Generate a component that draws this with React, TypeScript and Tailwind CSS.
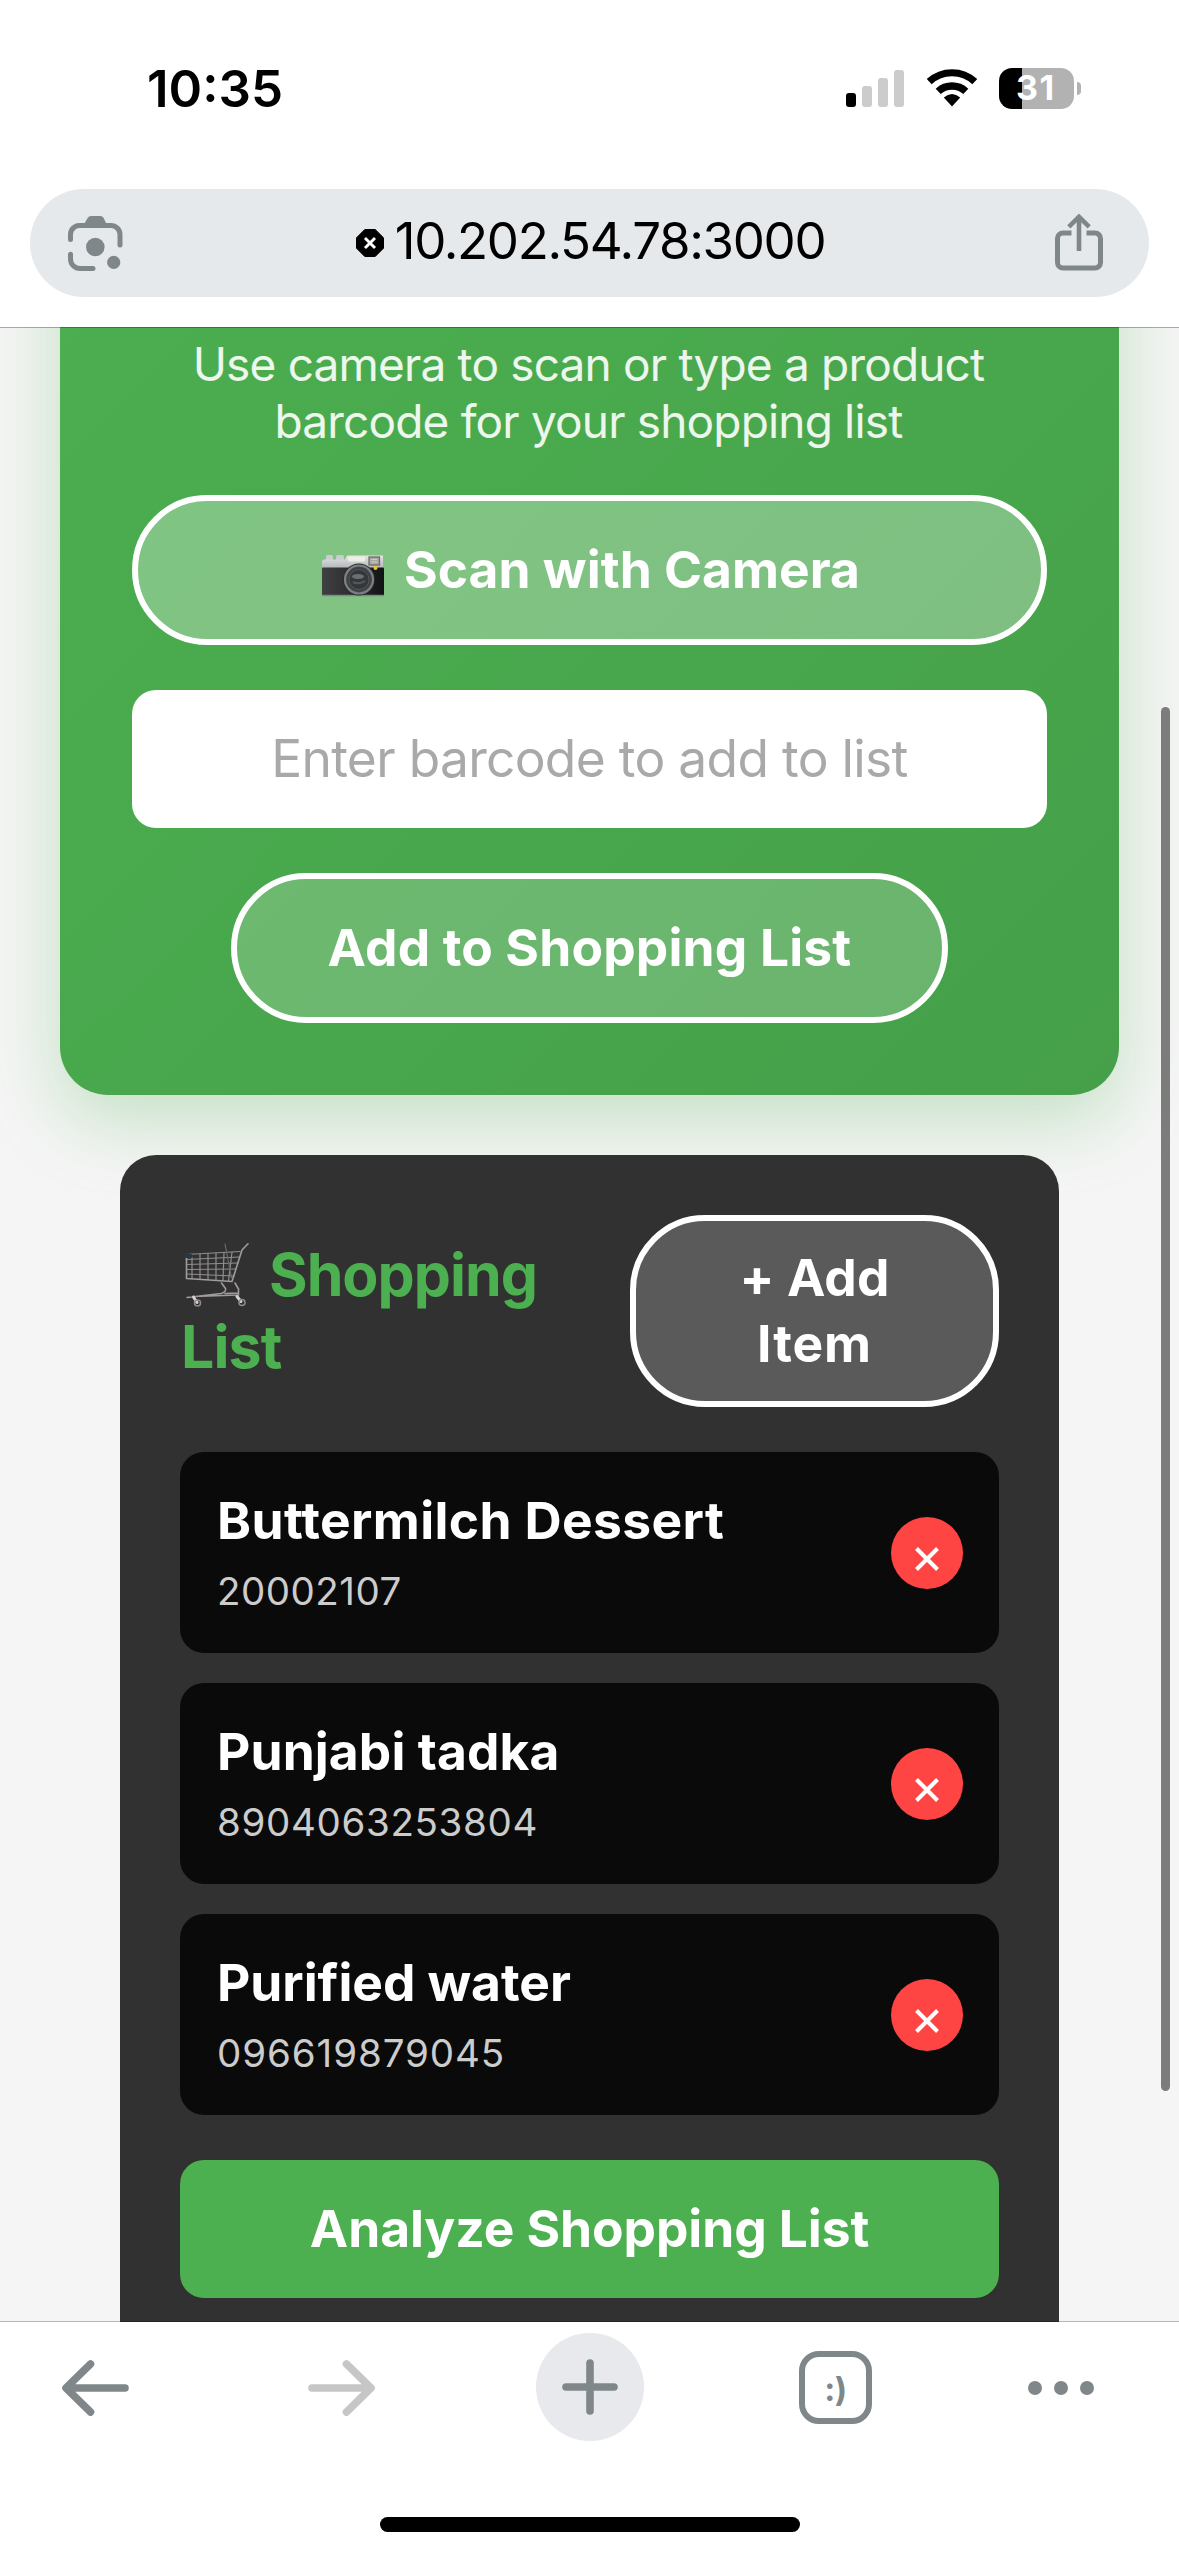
import React from "react";

const items = [
  { name: "Buttermilch Dessert", code: "20002107", nameCls: "tracking-[0.37px]", codeCls: "tracking-[0.5px]" },
  { name: "Punjabi tadka", code: "8904063253804", nameCls: "tracking-[0.1px]", codeCls: "tracking-[0.66px]" },
  { name: "Purified water", code: "096619879045", nameCls: "tracking-[-0.05px]", codeCls: "tracking-[0.92px]" },
];

function Wifi() {
  return (
    <svg width="51" height="38" viewBox="0 0 51 38" fill="none" stroke="#000">
      <path d="M2.2 12.7A33.5 33.5 0 0 1 47.8 12.7" strokeWidth="7.2" />
      <path d="M11.2 22.4A20.3 20.3 0 0 1 38.8 22.4" strokeWidth="7.4" />
      <path d="M25 37.4L16.8 28.6Q25 21.3 33.2 28.6Z" fill="#000" stroke="none" />
    </svg>
  );
}

function LensIcon() {
  return (
    <svg width="55" height="55" viewBox="0 0 55 55" fill="none" stroke="#80878a" strokeWidth="5" strokeLinecap="round">
      <path d="M2.5 23.5V18.5a9 9 0 0 1 9-9H43a9 9 0 0 1 9 9V29" />
      <path d="M2.5 38.2V43a9.5 9.5 0 0 0 9.5 9.5H25" />
      <g fill="#80878a" stroke="none">
        <path d="M15.5 9L19.8 1.8Q20.8 0 23 0H32.5Q34.5 0 35.5 1.8L39 9Z" />
        <circle cx="27.3" cy="31" r="9.3" />
        <circle cx="45.7" cy="46.4" r="6.6" />
      </g>
    </svg>
  );
}

function InsecureIcon() {
  return (
    <svg width="28" height="28" viewBox="0 0 28 28">
      <path d="M8.8 0.5H19.2L27.5 8.8V19.2L19.2 27.5H8.8L0.5 19.2V8.8Z" fill="#000" stroke="#000" strokeLinejoin="round" />
      <path d="M9 9L19 19M19 9L9 19" stroke="#fff" strokeWidth="2.9" />
    </svg>
  );
}

function ShareIcon() {
  return (
    <svg width="48" height="58" viewBox="0 0 48 58" fill="none" stroke="#80878a" strokeWidth="5">
      <path d="M16.5 19H8a5.5 5.5 0 0 0-5.5 5.5V48.5a5.5 5.5 0 0 0 5.5 5.5H40a5.5 5.5 0 0 0 5.5-5.5V24.5a5.5 5.5 0 0 0-5.5-5.5H31.5" />
      <path d="M24 37V4" strokeWidth="4.6" />
      <path d="M13.8 12.8L24 2.8L34.2 12.8" strokeWidth="4.6" />
    </svg>
  );
}

function CameraArt() {
  return (
    <svg width="62" height="42" viewBox="0 0 62 42">
      <defs>
        <linearGradient id="cam-top" x1="0" y1="0" x2="0" y2="1">
          <stop offset="0" stopColor="#e4e6e7" />
          <stop offset="1" stopColor="#b4b8ba" />
        </linearGradient>
        <linearGradient id="cam-body" x1="0" y1="0" x2="1" y2="0">
          <stop offset="0" stopColor="#3f4042" />
          <stop offset="0.6" stopColor="#29292b" />
          <stop offset="1" stopColor="#111214" />
        </linearGradient>
        <radialGradient id="cam-lens">
          <stop offset="0" stopColor="#65696c" />
          <stop offset="0.55" stopColor="#2d3033" />
          <stop offset="1" stopColor="#4b4f52" />
        </radialGradient>
      </defs>
      <rect x="4" y="0" width="7" height="6" rx="1.5" fill="#c9cdcf" />
      <rect x="14" y="0" width="8" height="6" rx="1.5" fill="#c9cdcf" />
      <path d="M0 7Q0 4.500 2.500 4.500H23L25 0.500H61V13H0Z" fill="url(#cam-top)" />
      <rect x="0" y="12.5" width="62" height="28" rx="1" fill="url(#cam-body)" />
      <path d="M0.5 40.5H61.5" stroke="#85888a" strokeWidth="1.5" />
      <rect x="26" y="1.5" width="17" height="5" rx="1.5" fill="#efeee2" />
      <rect x="47" y="2" width="10.5" height="8" fill="#aaa9a2" stroke="#6e6b64" strokeWidth="1.3" />
      <path d="M49.5 4.5H55M49.5 7H55" stroke="#d0cdbd" strokeWidth="1" />
      <circle cx="37" cy="24.5" r="16" fill="#292b2d" />
      <circle cx="37" cy="24.5" r="14" fill="url(#cam-lens)" stroke="#7d8082" strokeWidth="2.2" />
      <circle cx="37" cy="24.5" r="10" fill="#35383b" stroke="#56595c" strokeWidth="1" />
      <ellipse cx="36" cy="21.5" rx="6" ry="2.5" fill="#6b6f73" />
      <path d="M31 27Q37 30 43 26" stroke="#55595d" strokeWidth="2" fill="none" />
      <circle cx="53.5" cy="13" r="2" fill="#f2c230" />
    </svg>
  );
}

function CartArt() {
  return (
    <svg width="64" height="64" viewBox="0 0 64 64" fill="none" strokeLinecap="round" strokeLinejoin="round">
      <g stroke="#918d8d" strokeWidth="1.2">
        <path d="M1 11.5L55 8.5M1 16.5L54 14M1.5 21.5L52 20M1.5 26.5L50.5 26M2 31L49 33" />
        <path d="M7 11V35.5M15 11V36M23 10.5V36.5M31 10V37M39 9.5L38 37M47 9L43.5 38" />
        <path d="M40 1L46.5 35" stroke="#6c6868" />
      </g>
      <path d="M63 0.8L57 7L47 38.5L1.5 35.5V12" stroke="#a09c9c" strokeWidth="1.6" />
      <path d="M36.5 40L40.5 45.5Q41.5 49 36 50.5L2 54.5M50 40L53.5 46V52L8 53.5M40 50.5L53 50" stroke="#a09c9c" strokeWidth="1.6" />
      <path d="M8.5 54L12 59.5M52 53.5L56 58.5" stroke="#d8cfcf" strokeWidth="3" />
      <circle cx="12.5" cy="60" r="3" stroke="#918b8b" strokeWidth="1.5" />
      <circle cx="57" cy="59.5" r="3" stroke="#918b8b" strokeWidth="1.5" />
      <path d="M1 13H6" stroke="#243649" strokeWidth="4" />
    </svg>
  );
}

function Arrow({ color, flip }: { color: string; flip?: boolean }) {
  return (
    <svg width="68" height="56" viewBox="0 0 68 56" fill="none" stroke={color} strokeWidth="7.6" strokeLinecap="round" strokeLinejoin="round" className={flip ? "-scale-x-100" : ""}>
      <path d="M64 28H6M29.5 4L5 28L29.5 52" />
    </svg>
  );
}

export default function App() {
  return (
    <div className="flex h-[2556px] w-[1179px] flex-col overflow-hidden bg-white font-['Inter',sans-serif] text-black">
      <header className="h-[327px] shrink-0">
        <div className="flex h-[176px] items-center pl-[147px]">
          <div className="w-[699px] text-[51px] leading-none font-semibold">10:35</div>
          <div className="flex h-[37px] items-end gap-[6px]">
            <div className="h-[14px] w-[10px] rounded-[3px] bg-black" />
            <div className="h-[21px] w-[10px] rounded-[3px] bg-[#cccccc]" />
            <div className="h-[29px] w-[10px] rounded-[3px] bg-[#cccccc]" />
            <div className="h-[37px] w-[10px] rounded-[3px] bg-[#cccccc]" />
          </div>
          <div className="ml-[22.5px]">
            <Wifi />
          </div>
          <div className="ml-[21.5px] flex items-center gap-[3px]">
            <div className="flex h-[41px] w-[75px] items-center overflow-hidden rounded-[13px] bg-[linear-gradient(to_right,#000_23px,#b2b2b2_23px)] pl-[17px] text-[34px] leading-none font-bold tracking-[1.5px] text-white">
              31
            </div>
            <div className="h-[13px] w-[4px] rounded-r-full bg-[#b2b2b2]" />
          </div>
        </div>
        <div className="mx-[30px] mt-[13px] flex h-[108px] items-center justify-between rounded-full bg-[#e6e9ec] pr-[46px] pl-[38px]">
          <LensIcon />
          <div className="flex items-center gap-[11px] pl-[3px]">
            <InsecureIcon />
            <span className="pb-[5px] text-[51px] leading-[60px] tracking-[-1.34px]">10.202.54.78:3000</span>
          </div>
          <ShareIcon />
        </div>
      </header>

      <main className="relative h-[1995px] shrink-0 overflow-hidden bg-[#f5f5f5]">
        <section className="mx-[60px] -mt-[150px] flex flex-col items-center rounded-[48px] bg-[linear-gradient(135deg,#4caf50,#45a049)] px-[72px] pt-[159px] pb-[72px] shadow-[0_24px_75px_rgba(76,175,80,0.3)]">
          <p className="pr-[2px] text-center text-[46px] leading-[57px] whitespace-nowrap text-white/90">
            <span className="tracking-[-0.83px]">Use camera to scan or type a product</span>
            <br />
            <span className="tracking-[-0.83px]">barcode for your shopping list</span>
          </p>
          <button className="mt-[45px] flex h-[150px] w-full items-center justify-center gap-[20px] rounded-[75px] border-[6px] border-white bg-white/30 pb-[1px] pl-[3px] text-[51.5px] font-bold tracking-[0.03px] text-white">
            <span className="pt-[12px]">
              <CameraArt />
            </span>
            Scan with Camera
          </button>
          <input
            className="mt-[45px] h-[138px] w-full rounded-[24px] bg-white pb-[2px] text-center text-[51.5px] tracking-[-0.71px] placeholder:text-[#a9a9a9]"
            placeholder="Enter barcode to add to list"
          />
          <button className="mt-[45px] h-[150px] w-[717px] rounded-[75px] border-[6px] border-white bg-white/20 pb-[1px] text-[51.5px] font-bold tracking-[0.17px] text-white">
            Add to Shopping List
          </button>
        </section>

        <section className="relative mx-[120px] mt-[60px] h-[1260px] rounded-t-[36px] bg-[#313131] px-[60px] pt-[60px]">
          <div className="flex h-[192px] items-center justify-between">
            <h2 className="text-[59px] leading-[72px] font-bold text-[#4caf50]">
              <span className="flex h-[72px] items-center gap-[20px] pl-[5px] tracking-[-1px]">
                <CartArt />
                Shopping
              </span>
              <span className="block pl-[1px] tracking-[-0.9px]">List</span>
            </h2>
            <button className="h-[192px] w-[369px] rounded-[75px] border-[6px] border-white bg-white/20 pb-[2px] text-[51.5px] leading-[66px] font-bold text-white">
              <span className="tracking-[0.15px]">+ Add</span>
              <br />
              <span className="tracking-[0.9px]">Item</span>
            </button>
          </div>

          <ul className="mt-[45px] flex flex-col gap-[30px]">
            {items.map((item) => (
              <li key={item.code} className="flex h-[201px] items-center justify-between rounded-[24px] bg-[#0a0a0a] pr-[36px] pl-[37px]">
                <div className="pb-[2px]">
                  <div className={`text-[51.5px] leading-[60px] font-bold text-white ${item.nameCls}`}>{item.name}</div>
                  <div className={`mt-[18px] text-[38.5px] leading-[46px] text-[#cccccc] ${item.codeCls}`}>{item.code}</div>
                </div>
                <button className="flex size-[72px] items-center justify-center rounded-full bg-[#ff4444] pt-[12px]" aria-label="Remove">
                  <svg width="24" height="26" viewBox="0 0 24 26" stroke="#fff" strokeWidth="4">
                    <path d="M1.5 2.5L22.5 23.5M22.5 2.5L1.5 23.5" />
                  </svg>
                </button>
              </li>
            ))}
          </ul>

          <button className="mt-[45px] h-[138px] w-full rounded-[24px] bg-[#4caf50] pb-[1px] text-[51.5px] font-bold tracking-[-0.08px] text-white">
            Analyze Shopping List
          </button>
        </section>

        <div className="absolute inset-x-0 top-0 h-px bg-black/30" />
        <div className="absolute inset-x-0 bottom-0 h-px bg-black/25" />
        <div className="absolute top-[380px] right-[9px] h-[1384px] w-[9px] rounded-full bg-[#7c7c7c]" />
      </main>

      <footer className="h-[234px] shrink-0">
        <div className="flex h-[131px] items-center pl-[61px]">
          <Arrow color="#80878a" />
          <div className="ml-[179px]">
            <Arrow color="#c6c6c6" flip />
          </div>
          <div className="mb-[2px] ml-[160px] flex size-[108px] items-center justify-center rounded-full bg-[#e8e9ed]">
            <svg width="56" height="56" viewBox="0 0 56 56" stroke="#80878a" strokeWidth="7.6" strokeLinecap="round">
              <path d="M28 4V52M4 28H52" />
            </svg>
          </div>
          <div className="ml-[155px] flex size-[73px] items-center justify-center rounded-[20px] border-[6.5px] border-[#80878a] pt-[4px] text-[33px] leading-none font-bold tracking-[-0.5px] text-[#80878a]">
            :)
          </div>
          <div className="ml-[156px] flex gap-[12px]">
            <div className="size-[14px] rounded-full bg-[#80878a]" />
            <div className="size-[14px] rounded-full bg-[#80878a]" />
            <div className="size-[14px] rounded-full bg-[#80878a]" />
          </div>
        </div>
        <div className="mx-auto mt-[64px] h-[15px] w-[420px] rounded-full bg-black" />
      </footer>
    </div>
  );
}
